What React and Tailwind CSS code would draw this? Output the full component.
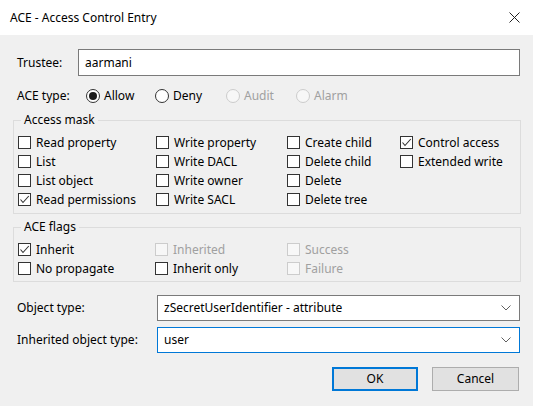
import clsx from "clsx";

const CheckMark = () => (
  <svg width="11" height="11" viewBox="0 0 11 11" fill="none">
    <polyline points="1.5,5.5 4,8.5 9.8,2" stroke="#333333" strokeWidth="1.1" />
  </svg>
);

const Check = ({ label, checked, disabled }) => (
  <div className="flex h-[19px] items-center gap-[5px] whitespace-nowrap">
    <span
      className={clsx(
        "flex h-[13px] w-[13px] shrink-0 items-center justify-center border",
        disabled ? "border-[#cccccc] bg-[#f7f7f7]" : "border-[#333333] bg-white"
      )}
    >
      {checked && <CheckMark />}
    </span>
    <span className={disabled ? "text-[#a0a0a0]" : "text-black"}>{label}</span>
  </div>
);

const Radio = ({ label, checked, disabled }) => (
  <div className="flex items-center gap-[4px] whitespace-nowrap">
    <span
      className={clsx(
        "flex h-[14px] w-[14px] shrink-0 items-center justify-center rounded-full border",
        disabled ? "border-[#cccccc] bg-[#f7f7f7]" : "border-[#333333] bg-white"
      )}
    >
      {checked && <span className="h-[8px] w-[8px] rounded-full bg-[#1a1a1a]" />}
    </span>
    <span className={disabled ? "text-[#a0a0a0]" : "text-black"}>{label}</span>
  </div>
);

const Chevron = () => (
  <svg width="10" height="6" viewBox="0 0 10 6" fill="none">
    <polyline points="0.5,0.5 5,5 9.5,0.5" stroke="#606060" strokeWidth="1" />
  </svg>
);

const Combo = ({ value, focused }) => (
  <div
    className={clsx(
      "flex h-[26px] flex-1 items-center justify-between border bg-white pl-[6px] pr-[8px]",
      focused ? "border-[#0078d7]" : "border-[#7a7a7a]"
    )}
  >
    <span>{value}</span>
    <Chevron />
  </div>
);

export default function App() {
  return (
    <div className="flex h-[406px] w-[533px] flex-col bg-[#f0f0f0] font-['Noto_Sans',sans-serif] text-[12px] leading-[16px] text-black">
      {/* title bar */}
      <div className="flex h-[35px] items-center justify-between bg-white pl-[10px] pr-[13px]">
        <span className="text-[12px]">ACE - Access Control Entry</span>
        <svg width="11" height="11" viewBox="0 0 11 11" fill="none">
          <line x1="0.5" y1="0.5" x2="10.5" y2="10.5" stroke="#222222" strokeWidth="1" />
          <line x1="10.5" y1="0.5" x2="0.5" y2="10.5" stroke="#222222" strokeWidth="1" />
        </svg>
      </div>

      <div className="flex flex-col pl-[13px] pr-[12px]">
        <div className="mt-[14px] flex items-center pr-[1px]">
          <span className="w-[65px] pl-[4px]">Trustee:</span>
          <div className="flex h-[27px] flex-1 items-center border border-[#7a7a7a] bg-white pl-[6px]">
            aarmani
          </div>
        </div>

        <div className="mt-[10px] flex h-[20px] items-center pl-[4px]">
          <span className="w-[69px]">ACE type:</span>
          <div className="w-[69px]">
            <Radio label="Allow" checked />
          </div>
          <div className="w-[71px]">
            <Radio label="Deny" />
          </div>
          <div className="w-[70px]">
            <Radio label="Audit" disabled />
          </div>
          <Radio label="Alarm" disabled />
        </div>

        <fieldset className="mt-[7px] border border-[#dcdcdc] pb-[4px]">
          <legend className="ml-[7px] px-[3px] leading-[14px]">Access mask</legend>
          <div className="grid grid-flow-col grid-cols-[138px_131px_113px_1fr] grid-rows-4 pl-[4px] pt-[6px]">
            <Check label="Read property" />
            <Check label="List" />
            <Check label="List object" />
            <Check label="Read permissions" checked />
            <Check label="Write property" />
            <Check label="Write DACL" />
            <Check label="Write owner" />
            <Check label="Write SACL" />
            <Check label="Create child" />
            <Check label="Delete child" />
            <Check label="Delete" />
            <Check label="Delete tree" />
            <Check label="Control access" checked />
            <Check label="Extended write" />
          </div>
        </fieldset>

        <fieldset className="mt-[6px] border border-[#dcdcdc] pb-[3px]">
          <legend className="ml-[7px] px-[3px] leading-[14px]">ACE flags</legend>
          <div className="grid grid-flow-col grid-cols-[137px_132px_1fr] grid-rows-2 pl-[4px] pt-[6px]">
            <Check label="Inherit" checked />
            <Check label="No propagate" />
            <Check label="Inherited" disabled />
            <Check label="Inherit only" />
            <Check label="Success" disabled />
            <Check label="Failure" disabled />
          </div>
        </fieldset>

        <div className="mt-[13px] flex items-center pr-[1px]">
          <span className="w-[144px] pl-[4px]">Object type:</span>
          <Combo value="zSecretUserIdentifier - attribute" />
        </div>
        <div className="mt-[6px] flex items-center pr-[1px]">
          <span className="w-[144px] pl-[4px]">Inherited object type:</span>
          <Combo value="user" focused />
        </div>

        <div className="mt-[14px] flex justify-end gap-[14px] pr-[2px]">
          <button className="h-[24px] w-[86px] border-2 border-[#0078d7] bg-[#e1e1e1]">OK</button>
          <button className="h-[24px] w-[87px] border border-[#adadad] bg-[#e1e1e1]">Cancel</button>
        </div>
      </div>
    </div>
  );
}
